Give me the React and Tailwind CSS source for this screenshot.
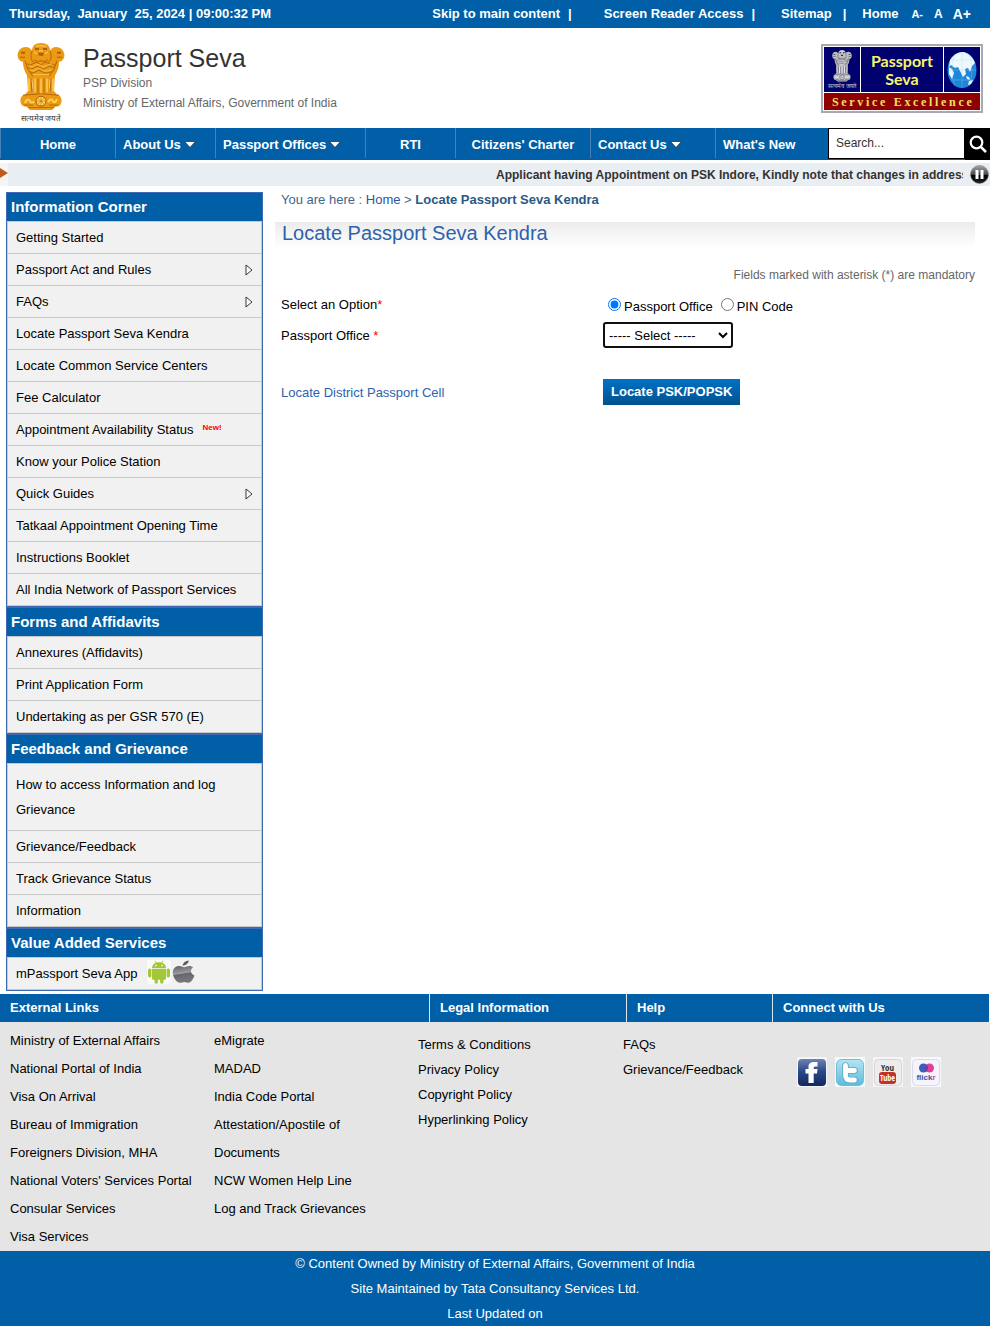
import React from "react";

function Emblem({ className, main, dark, light }) {
  return (
    <svg viewBox="0 0 48 69" preserveAspectRatio="none" className={className} aria-hidden="true">
      <g fill={main}>
        <path d="M1 15C-1 9 4 4 9 4c3 0 5 2 6 4 0-5 3-8 9-8s9 3 9 8c1-2 3-4 6-4 5 0 10 5 8 11-1 3-3 4-5 4 0 6-2 12-6 16l-2 2H14l-2-2c-4-4-6-10-6-16-2 0-4-1-5-4z" />
        <path d="M10 32l4 3 2 17H8l3-3zM15 34h6v18h-5zM21 35h6v17h-6zM27 34h6l-1 18h-5zM38 32l-4 3-2 17h8l-3-3z" />
        <path d="M6 53c4-3 32-3 36 0 4 3 3 9 0 11l-4 1-3 3H13l-3-3-4-1c-3-2-4-8 0-11z" />
      </g>
      <path d="M8 18q2 10 8 16M40 18q-2 10-8 16M15 8q-3 8 2 12M33 8q3 8-2 12" fill="none" stroke={dark} strokeWidth="0.9" />
      <path d="M10 21q3 3 6 0t6 0 4 0 6 0 6 0M11 25q3 3 6 0t6 0 6 0 8 0M13 29q3 3 6 0t6 0 10 0M17 17q3 3 7 1 4 2 7-1" fill="none" stroke={dark} strokeWidth="0.9" />
      <path d="M12 23q3 3 6 0t6 0 6 0 6 0M13 27q3 3 6 0t6 0 9 0M16 32h16" fill="none" stroke={light} strokeWidth="0.7" />
      <path d="M18 5h4v2h-4zM26 5h4v2h-4zM21 10h6l-1 3h-4zM4 9h4v2H4zM40 9h4v2h-4zM3 14h5v1H3zM40 14h5v1h-5z" fill={dark} />
      <path d="M19 3h10M17 9l3 2M31 9l-3 2M22 8h4" stroke={light} strokeWidth="1" />
      <path d="M14 36l1 14M21 36v15M27 36v15M34 36l-1 14M6 53q18-3 36 0" fill="none" stroke={dark} strokeWidth="0.9" />
      <path d="M12 36v13M18 36v14M24 36v15M30 36v14M36 36v13" stroke={light} strokeWidth="1.4" />
      <circle cx="24" cy="59" r="5" fill={light} stroke={dark} strokeWidth="1" />
      <path d="M24 54v10M19 59h10M20.500 55.500l7 7M27.500 55.500l-7 7" stroke={dark} strokeWidth="0.5" />
      <path d="M8 61q2-6 5-2 2 3 4 0M31 60q3-5 5-1 2 3 4-2" fill="none" stroke={light} strokeWidth="1.8" />
      <path d="M7 63h9M32 63h9M11 65.500h26" stroke={dark} strokeWidth="0.8" />
    </svg>
  );
}

function Logo() {
  return (
    <div className="flex h-[69px] w-[162px] flex-col gap-px border-2 border-[#a9a9b4] bg-white p-px">
      <div className="flex h-[45px] gap-px">
        <div className="flex w-9 flex-col items-center justify-center gap-px bg-[#00006e]">
          <Emblem className="h-8 w-5" main="#bdbdbd" dark="#2a2a44" light="#ffffff" />
          <span lang="hi" className="text-[6px] leading-[6px] whitespace-nowrap text-[#c9c9c9]">सत्यमेव जयते</span>
        </div>
        <div className="flex flex-1 flex-col items-center justify-center bg-[#00006e] font-['Lato','Noto_Sans',sans-serif] text-[16px] leading-[18px] font-bold text-[#f8f56a]">
          <span>Passport</span>
          <span>Seva</span>
        </div>
        <div className="flex w-9 items-center justify-center bg-[#00006e]">
          <svg viewBox="0 0 30 38" className="h-[38px] w-[30px]" aria-hidden="true">
            <ellipse cx="15" cy="19" rx="14.5" ry="18" fill="#1c86d8" />
            <path d="M3 9C7 3 12 1 16 1c6 1 10 6 12 11l-3 3-2 6-2-4-3 1 1 5-3 3-3-6-2-4-3 1-4-3-2 2z" fill="#eef8ff" />
            <path d="M19 25l3 1 1 3-3-1zM22 30l4-1-2 4-3 1zM2 16l3 2 2 4-2 6-3-5z" fill="#eef8ff" />
            <path d="M1 19h28M15 1v36M4 9h22M4 29h22M8 3q-6 16 0 32M22 3q6 16 0 32" fill="none" stroke="#a8d4f5" strokeWidth="0.3" />
          </svg>
        </div>
      </div>
      <div className="flex flex-1 items-center justify-between bg-[#8e0000] px-2 font-['Liberation_Serif',serif] text-[12px] leading-[14px] font-bold text-[#f0e060]">
        {"Service Excellence".split("").map((c, i) => (
          <span key={i}>{c === " " ? "\u00a0" : c}</span>
        ))}
      </div>
    </div>
  );
}

const navItems = [
  { label: "Home", cls: "w-[115px] justify-center" },
  { label: "About Us", cls: "w-[100px] pl-[7px]", menu: true },
  { label: "Passport Offices", cls: "w-[150px] pl-[7px]", menu: true },
  { label: "RTI", cls: "w-[90px] justify-center" },
  { label: "Citizens' Charter", cls: "w-[135px] justify-center" },
  { label: "Contact Us", cls: "w-[125px] pl-[7px]", menu: true },
  { label: "What's New", cls: "w-[113px] pl-[7px]" },
];

const sections = [
  {
    title: "Information Corner",
    items: [
      { label: "Getting Started" },
      { label: "Passport Act and Rules", arrow: true },
      { label: "FAQs", arrow: true },
      { label: "Locate Passport Seva Kendra" },
      { label: "Locate Common Service Centers" },
      { label: "Fee Calculator" },
      { label: "Appointment Availability Status", fresh: true },
      { label: "Know your Police Station" },
      { label: "Quick Guides", arrow: true },
      { label: "Tatkaal Appointment Opening Time" },
      { label: "Instructions Booklet" },
      { label: "All India Network of Passport Services" },
    ],
  },
  {
    title: "Forms and Affidavits",
    items: [
      { label: "Annexures (Affidavits)" },
      { label: "Print Application Form" },
      { label: "Undertaking as per GSR 570 (E)" },
    ],
  },
  {
    title: "Feedback and Grievance",
    items: [
      { label: "How to access Information and log Grievance", tall: true },
      { label: "Grievance/Feedback" },
      { label: "Track Grievance Status" },
      { label: "Information" },
    ],
  },
  { title: "Value Added Services", items: [{ label: "mPassport Seva App", apps: true }] },
];

function AppIcons() {
  return (
    <span className="ml-[10px] flex items-center gap-px pb-1">
      <svg viewBox="0 0 24 24" className="size-6" aria-hidden="true">
        <rect width="24" height="24" rx="3" fill="#fafafa" />
        <g fill="#a4c639">
          <path d="M5 8.200C5 4.500 8 2.200 12 2.200s7 2.300 7 6z" />
          <path d="M5 9h14v9.500a1.200 1.200 0 0 1-1.200 1.200H6.200A1.200 1.200 0 0 1 5 18.500z" />
          <rect x="1" y="8.500" width="3.400" height="9" rx="1.700" />
          <rect x="19.600" y="8.500" width="3.400" height="9" rx="1.700" />
          <path d="M7.500 19h3.400v3a1.700 1.700 0 0 1-3.400 0zM13.100 19h3.400v3a1.700 1.700 0 0 1-3.400 0z" />
        </g>
        <path d="M8 0.800l1.600 2.600M16 0.800l-1.600 2.600" stroke="#a4c639" strokeWidth="0.900" />
        <circle cx="9" cy="5.600" r="0.800" fill="#fff" />
        <circle cx="15" cy="5.600" r="0.800" fill="#fff" />
      </svg>
      <svg viewBox="0 0 24 24" className="size-6" aria-hidden="true">
        <defs>
          <linearGradient id="steel" x1="0" y1="0" x2="0.200" y2="1">
            <stop offset="0" stopColor="#5c5c62" />
            <stop offset="0.500" stopColor="#9c9ca2" />
            <stop offset="0.550" stopColor="#66666c" />
            <stop offset="1" stopColor="#77777c" />
          </linearGradient>
        </defs>
        <path d="M21 7.500c-3 1.800-2.800 6.500 1.500 8-1.200 3.500-3.500 7.200-6 7.200-1.500 0-2.300-.8-4.200-.8s-2.600.8-4.200.8C4.200 22.700.800 17 .800 12.500.800 8.500 3.800 6 7 6c2.200 0 3.600 1.200 5.200 1.200S15.300 5.900 17.600 6c1.300 0 2.600.5 3.400 1.500z" fill="url(#steel)" />
        <path d="M10.500 5.600C11 2.800 13.500.800 16.800.500c-.2 2.800-2.800 5-6.300 5.100z" fill="#5c5c62" />
      </svg>
    </span>
  );
}

function SideItem({ item }) {
  return (
    <li className="border-b border-[#c8c8c8]">
      <a href="#" className={`flex items-center pl-2 text-[13px] ${item.tall ? "h-[66px] pr-8 leading-[25px]" : "h-[31px] pr-2 leading-4"}`}>
        <span>{item.label}</span>
        {item.fresh && <span className="ml-[9px] pb-1 text-[8px] leading-[10px] font-bold text-[#ff0000]">New!</span>}
        {item.arrow && (
          <svg viewBox="0 0 8 12" className="ml-auto h-3 w-2" aria-hidden="true">
            <path d="M1 1L7 6 1 11z" fill="#fff" stroke="#222" strokeWidth="0.9" />
          </svg>
        )}
        {item.apps && <AppIcons />}
      </a>
    </li>
  );
}

const external = [
  "Ministry of External Affairs",
  "National Portal of India",
  "Visa On Arrival",
  "Bureau of Immigration",
  "Foreigners Division, MHA",
  "National Voters' Services Portal",
  "Consular Services",
  "Visa Services",
];
const external2 = ["eMigrate", "MADAD", "India Code Portal", "Attestation/Apostile of Documents", "NCW Women Help Line", "Log and Track Grievances"];
const legal = ["Terms & Conditions", "Privacy Policy", "Copyright Policy", "Hyperlinking Policy"];
const help = ["FAQs", "Grievance/Feedback"];

function LinkList({ items, className }) {
  return (
    <ul className={className}>
      {items.map((t) => (
        <li key={t}>
          <a href="#">{t}</a>
        </li>
      ))}
    </ul>
  );
}

function Social() {
  return (
    <div className="flex gap-2 pt-[35px] pl-2">
      <a href="#" aria-label="Facebook">
        <svg viewBox="0 0 30 30" className="size-[30px]">
          <defs>
            <linearGradient id="fb" x1="0" y1="0" x2="0" y2="1">
              <stop offset="0" stopColor="#6d83b4" />
              <stop offset="0.45" stopColor="#2b4a8b" />
              <stop offset="1" stopColor="#10285c" />
            </linearGradient>
          </defs>
          <rect width="30" height="30" fill="#f4f6fa" />
          <rect x="1" y="2" width="28" height="27" rx="4" fill="url(#fb)" />
          <path d="M11.500 26V16.500H8.500v-4.500h3v-2C11.500 6.500 13.500 5 17 5h3.500v4.500h-2c-1.300 0-1.800.5-1.800 1.500v1h3.800l-.5 4.500h-3.300V26z" fill="#fff" />
        </svg>
      </a>
      <a href="#" aria-label="Twitter">
        <svg viewBox="0 0 30 30" className="size-[30px]">
          <defs>
            <linearGradient id="tw" x1="0" y1="0" x2="0" y2="1">
              <stop offset="0" stopColor="#b6e4f2" />
              <stop offset="1" stopColor="#5bbbdc" />
            </linearGradient>
          </defs>
          <rect width="30" height="30" fill="#f2fafc" />
          <rect x="1.500" y="2.500" width="27" height="26" rx="5" fill="url(#tw)" stroke="#72bcd5" />
          <path d="M10.500 8.500v9.500c0 3.500 1.800 5 4.800 5h4.200M11 13.500h8.500" fill="none" stroke="#5ba9c4" strokeWidth="6.500" strokeLinecap="round" />
          <path d="M10.500 8.500v9.500c0 3.500 1.800 5 4.800 5h4.200M11 13.500h8.500" fill="none" stroke="#fff" strokeWidth="4.800" strokeLinecap="round" />
        </svg>
      </a>
      <a href="#" aria-label="YouTube">
        <svg viewBox="0 0 30 30" className="size-[30px]">
          <rect width="30" height="30" fill="#f6f4f4" />
          <rect x="1.500" y="2.500" width="27" height="26" rx="4" fill="#ededed" stroke="#ddd2d2" />
          <rect x="6" y="15" width="17" height="12" rx="3" fill="#c4302b" />
          <text x="14.500" y="14" textAnchor="middle" fontSize="9" fontWeight="bold" fontFamily="Open Sans Condensed, Roboto Condensed, Roboto" fill="#333">You</text>
          <text x="14.500" y="24" textAnchor="middle" fontSize="8" fontWeight="bold" fontFamily="Open Sans Condensed, Roboto Condensed, Roboto" fill="#fff">Tube</text>
        </svg>
      </a>
      <a href="#" aria-label="Flickr">
        <svg viewBox="0 0 30 30" className="size-[30px]">
          <rect width="30" height="30" fill="#f8f8fc" />
          <rect x="1.500" y="2.500" width="27" height="26" rx="4" fill="#f4f4fa" stroke="#d9d9ea" />
          <circle cx="12.500" cy="11" r="4.500" fill="#3b5fb8" />
          <circle cx="18.500" cy="11" r="4.500" fill="#e0409a" />
          <path d="M15.500 7.600a4.500 4.500 0 0 1 0 6.800 4.500 4.500 0 0 1 0-6.800z" fill="#7a3a9c" />
          <text x="15" y="22.500" textAnchor="middle" fontSize="8" fontWeight="bold" fontFamily="Liberation Sans" fill="#3d4fa0">
            flick<tspan fill="#e0409a">r</tspan>
          </text>
        </svg>
      </a>
    </div>
  );
}

export default function App() {
  return (
    <div className="flex min-h-screen flex-col bg-white font-['Liberation_Sans',Arial,sans-serif] text-[13px] text-black">
      <div className="flex h-7 items-center bg-[#005fa7] pl-[9px] pr-[19px] leading-4 font-bold text-white">
        <span className="whitespace-pre">Thursday,  January  25, 2024 | 09:00:32 PM</span>
        <nav className="ml-auto flex items-center">
          <a href="#main">Skip to main content</a>
          <span className="ml-2 mr-8">|</span>
          <a href="#">Screen Reader Access</a>
          <span className="ml-2 mr-[26px]">|</span>
          <a href="#">Sitemap</a>
          <span className="ml-[11px] mr-4">|</span>
          <a href="#">Home</a>
          <button type="button" className="ml-[13px] text-[11px]">A-</button>
          <button type="button" className="ml-[11px] text-[12px]">A</button>
          <button type="button" className="ml-[10px] text-[14px]">A+</button>
        </nav>
      </div>

      <header className="flex h-[100px] items-start justify-between pl-[17px] pr-[7px]">
        <div className="flex">
          <div className="flex w-12 flex-col items-center gap-[3px] pt-[15px]">
            <Emblem className="h-[68px] w-12" main="#eb9a14" dark="#b05f04" light="#ffd45c" />
            <span lang="hi" className="text-[8px] leading-[9px] whitespace-nowrap text-[#333]">सत्यमेव जयते</span>
          </div>
          <div className="pt-4 pl-[18px] text-[12px] leading-5 text-[#666]">
            <h1 className="text-[25px] leading-[29px] text-[#333]">Passport Seva</h1>
            <p>PSP Division</p>
            <p>Ministry of External Affairs, Government of India</p>
          </div>
        </div>
        <div className="pt-4">
          <Logo />
        </div>
      </header>

      <div className="flex h-8 bg-[#005fa7]">
        <nav className="flex h-[30px] shrink-0 font-bold text-white">
          {navItems.map((n) => (
            <a key={n.label} href="#" className={`flex items-center border-l border-[#4a7fb5] pt-[3px] leading-4 whitespace-nowrap ${n.cls}`}>
              {n.label}
              {n.menu && (
                <svg viewBox="0 0 12 7" className="ml-[3px] h-[7px] w-3" aria-hidden="true">
                  <path d="M0.500 0.500h11L6 6.500z" fill="#fff" stroke="#333" strokeWidth="0.800" />
                </svg>
              )}
            </a>
          ))}
        </nav>
        <form className="flex h-8 min-w-0 flex-1 pb-px" onSubmit={(e) => e.preventDefault()}>
          <input
            type="text"
            aria-label="Search"
            placeholder="Search..."
            className="w-0 min-w-0 flex-1 border border-black bg-white px-[7px] pb-px text-[12px] text-black outline-none placeholder:text-[#333]"
          />
          <button type="submit" aria-label="Search" className="-mb-px flex w-[25px] shrink-0 items-center justify-center bg-black">
            <svg viewBox="0 0 18 18" className="size-[18px]" fill="none" stroke="#fff" strokeWidth="2.200">
              <circle cx="7.500" cy="7.500" r="5.800" />
              <path d="M11.800 11.800L17 17" strokeWidth="2.600" />
            </svg>
          </button>
        </form>
      </div>

      <div className="mt-[3px] flex h-[23px] items-center bg-[#e9eef2]">
        <div className="flex h-full w-2 items-center bg-[#f5f5f5]">
          <svg viewBox="0 0 8 12" className="-mt-[3px] h-3 w-2" aria-hidden="true">
            <path d="M0 1L8 6 0 11z" fill="#c05a22" />
          </svg>
        </div>
        <div className="flex-1 overflow-hidden">
          <p className="ml-auto w-[467px] overflow-hidden text-[12px] leading-5 font-bold whitespace-nowrap text-[#333]">
            Applicant having Appointment on PSK Indore, Kindly note that changes in address
          </p>
        </div>
        <button type="button" aria-label="Pause" className="ml-[7px] mr-px flex size-[19px]">
          <svg viewBox="0 0 19 19" className="size-[19px]">
            <defs>
              <linearGradient id="pause" x1="0" y1="0" x2="0" y2="1">
                <stop offset="0" stopColor="#aaa" />
                <stop offset="0.5" stopColor="#444" />
                <stop offset="0.55" stopColor="#000" />
                <stop offset="1" stopColor="#222" />
              </linearGradient>
            </defs>
            <circle cx="9.500" cy="9.500" r="9" fill="url(#pause)" stroke="#777" strokeWidth="0.600" />
            <path d="M5.500 5h3v9h-3zM10.500 5h3v9h-3z" fill="#fff" />
          </svg>
        </button>
      </div>

      <div className="flex pt-[6px] pb-[3px] pl-[6px] pr-[15px]">
        <aside className="w-[257px] shrink-0">
          {sections.map((s) => (
            <section key={s.title} className="border border-[#3e69b1] bg-[#005fa7]">
              <h2 className="h-7 pl-1 text-[15px] leading-7 font-bold text-white">{s.title}</h2>
              <ul className="border-x border-t border-[#c8c8c8] bg-[#f1f1f1]">
                {s.items.map((i) => (
                  <SideItem key={i.label} item={i} />
                ))}
              </ul>
            </section>
          ))}
        </aside>

        <main id="main" className="ml-3 flex-1">
          <p className="pl-[6px] leading-4 text-[#44658a]">
            You are here : <a href="#" className="text-[#2557a5]">Home</a> &gt; <b className="text-[#2b5885]">Locate Passport Seva Kendra</b>
          </p>
          <h2 className="mt-[14px] h-[26px] bg-linear-to-b from-[#ececec] to-white pl-[7px] text-[20px] leading-[22px] text-[#2d62ad]">
            Locate Passport Seva Kendra
          </h2>
          <p className="mt-[19px] text-right text-[12px] leading-4 text-[#666]">Fields marked with asterisk (*) are mandatory</p>
          <form className="grid grid-cols-[322fr_372fr] pt-[11px] pl-[6px]" onSubmit={(e) => e.preventDefault()}>
            <span id="opt" className="pt-[3px] leading-4">
              Select an Option<span className="text-[#f00]">*</span>
            </span>
            <div role="radiogroup" aria-labelledby="opt" className="flex h-7 items-start leading-4">
              <label className="ml-[5px] flex">
                <input type="radio" name="option" defaultChecked className="mt-1 mr-[3px] size-[13px]" />
                <span className="pt-[5px]">Passport Office</span>
              </label>
              <label className="ml-2 flex">
                <input type="radio" name="option" className="mt-1 mr-[3px] size-[13px]" />
                <span className="pt-[5px]">PIN Code</span>
              </label>
            </div>
            <label htmlFor="office" className="pt-[6px] leading-4">
              Passport Office <span className="text-[#f00]">*</span>
            </label>
            <div className="h-[57px]">
              <select id="office" className="h-[26px] w-[130px] rounded-[3px] border-2 border-[#101010] bg-white text-[13px]">
                <option>----- Select -----</option>
              </select>
            </div>
            <a href="#" className="pt-[6px] leading-4 text-[#2d62ad]">Locate District Passport Cell</a>
            <div>
              <button type="submit" className="h-[26px] bg-linear-to-b from-[#0072c6] to-[#00528f] px-2 pb-px font-bold text-white">
                Locate PSK/POPSK
              </button>
            </div>
          </form>
        </main>
      </div>

      <footer className="flex flex-1 flex-col">
        <div className="mr-px grid h-7 grid-cols-[429fr_197fr_146fr_217fr] bg-[#005fa7] leading-7 font-bold text-white">
          <h3 className="pl-[10px]">External Links</h3>
          <h3 className="border-l border-[#dde6ee] pl-[10px]">Legal Information</h3>
          <h3 className="border-l border-[#dde6ee] pl-[10px]">Help</h3>
          <h3 className="border-l border-[#dde6ee] pl-[10px]">Connect with Us</h3>
        </div>
        <div className="grid flex-1 grid-cols-[204fr_204fr_205fr_166fr_201fr] bg-[#e5e5e5] pl-[10px]">
          <LinkList items={external} className="pt-[5px] leading-7" />
          <LinkList items={external2} className="pt-[5px] pr-12 leading-7" />
          <LinkList items={legal} className="pt-[10px] leading-[25px]" />
          <LinkList items={help} className="pt-[10px] leading-[25px]" />
          <Social />
        </div>
        <div className="bg-[#005fa7] text-center leading-[25px] text-white">
          <p>© Content Owned by Ministry of External Affairs, Government of India</p>
          <p>Site Maintained by Tata Consultancy Services Ltd.</p>
          <p>Last Updated on</p>
        </div>
      </footer>
    </div>
  );
}
